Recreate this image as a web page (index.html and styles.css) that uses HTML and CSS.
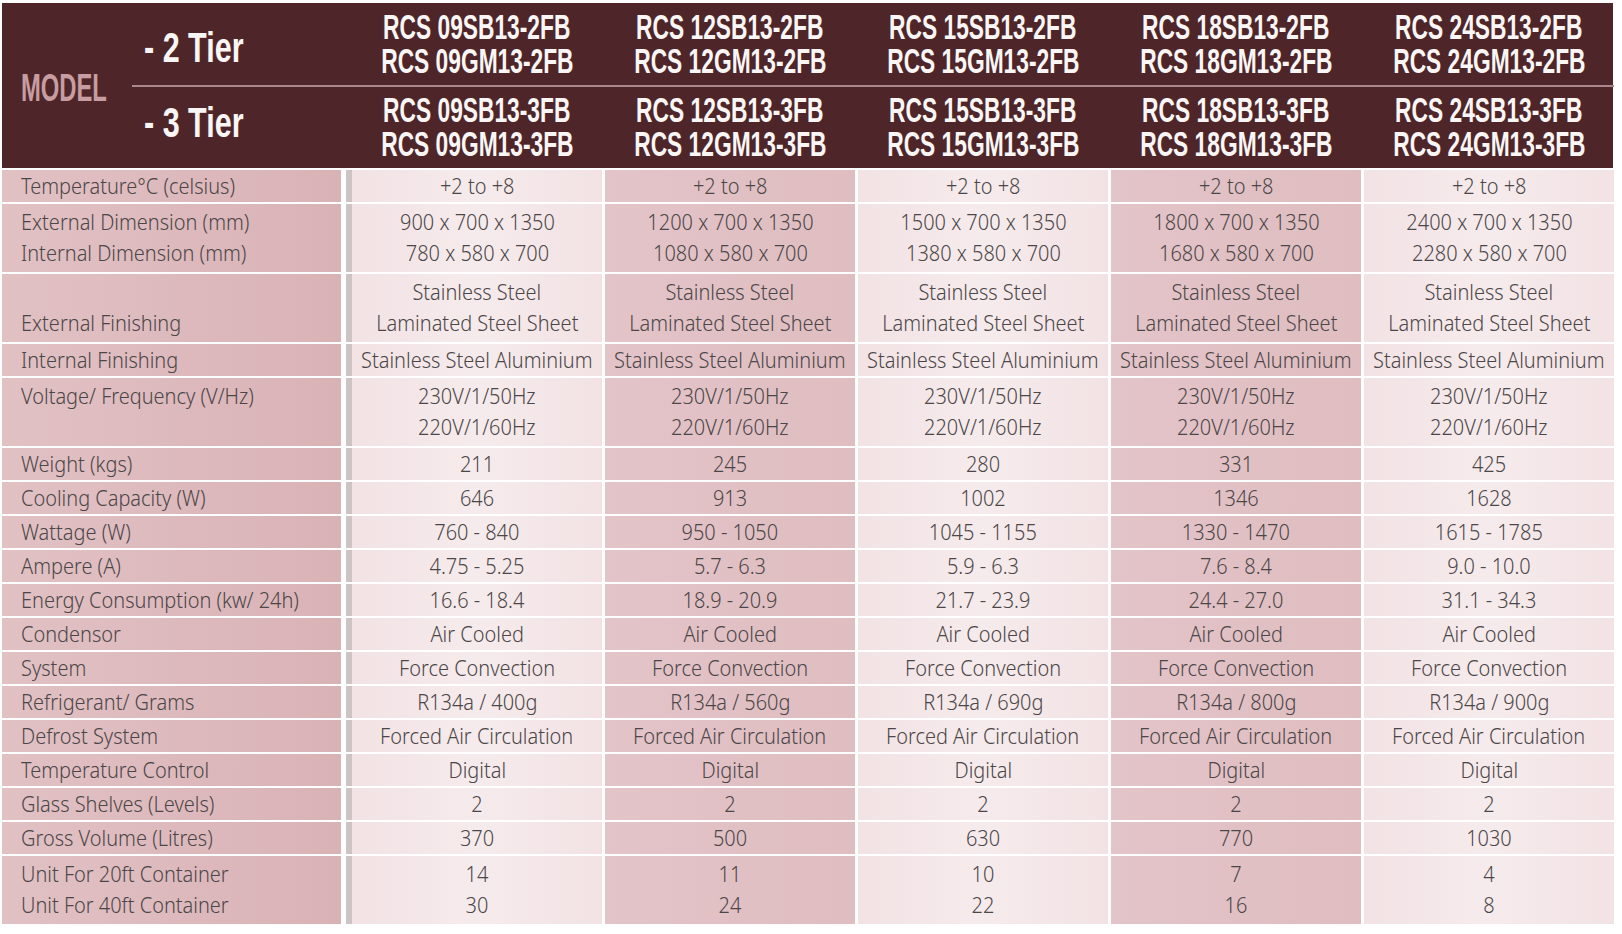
FILE: index.html
```html
<!DOCTYPE html>
<html>
<head>
<meta charset="utf-8">
<link rel="stylesheet" href="styles.css">
</head>
<body>
<div class="sheet">
  <div class="head">
    <div class="model"><span>MODEL</span></div>
    <div class="tiers">
      <div class="trow">
        <div class="tier t2"><span>- 2 Tier</span></div>
        <div class="code"><span>RCS 09SB13-2FB</span><span>RCS 09GM13-2FB</span></div>
        <div class="code"><span>RCS 12SB13-2FB</span><span>RCS 12GM13-2FB</span></div>
        <div class="code"><span>RCS 15SB13-2FB</span><span>RCS 15GM13-2FB</span></div>
        <div class="code"><span>RCS 18SB13-2FB</span><span>RCS 18GM13-2FB</span></div>
        <div class="code"><span>RCS 24SB13-2FB</span><span>RCS 24GM13-2FB</span></div>
      </div>
      <div class="hline"></div>
      <div class="trow">
        <div class="tier t3"><span>- 3 Tier</span></div>
        <div class="code"><span>RCS 09SB13-3FB</span><span>RCS 09GM13-3FB</span></div>
        <div class="code"><span>RCS 12SB13-3FB</span><span>RCS 12GM13-3FB</span></div>
        <div class="code"><span>RCS 15SB13-3FB</span><span>RCS 15GM13-3FB</span></div>
        <div class="code"><span>RCS 18SB13-3FB</span><span>RCS 18GM13-3FB</span></div>
        <div class="code"><span>RCS 24SB13-3FB</span><span>RCS 24GM13-3FB</span></div>
      </div>
    </div>
  </div>

  <div class="row"><div class="lab"><span>Temperature°C (celsius)</span></div><div class="c"><span>+2 to +8</span></div><div class="c"><span>+2 to +8</span></div><div class="c"><span>+2 to +8</span></div><div class="c"><span>+2 to +8</span></div><div class="c"><span>+2 to +8</span></div></div>
  <div class="row dbl"><div class="lab"><span>External Dimension (mm)</span><span>Internal Dimension (mm)</span></div><div class="c"><span>900 x 700 x 1350</span><span>780 x 580 x 700</span></div><div class="c"><span>1200 x 700 x 1350</span><span>1080 x 580 x 700</span></div><div class="c"><span>1500 x 700 x 1350</span><span>1380 x 580 x 700</span></div><div class="c"><span>1800 x 700 x 1350</span><span>1680 x 580 x 700</span></div><div class="c"><span>2400 x 700 x 1350</span><span>2280 x 580 x 700</span></div></div>
  <div class="row dbl"><div class="lab bottom"><span>External Finishing</span></div><div class="c"><span>Stainless Steel</span><span>Laminated Steel Sheet</span></div><div class="c"><span>Stainless Steel</span><span>Laminated Steel Sheet</span></div><div class="c"><span>Stainless Steel</span><span>Laminated Steel Sheet</span></div><div class="c"><span>Stainless Steel</span><span>Laminated Steel Sheet</span></div><div class="c"><span>Stainless Steel</span><span>Laminated Steel Sheet</span></div></div>
  <div class="row"><div class="lab"><span>Internal Finishing</span></div><div class="c"><span>Stainless Steel Aluminium</span></div><div class="c"><span>Stainless Steel Aluminium</span></div><div class="c"><span>Stainless Steel Aluminium</span></div><div class="c"><span>Stainless Steel Aluminium</span></div><div class="c"><span>Stainless Steel Aluminium</span></div></div>
  <div class="row dbl"><div class="lab top"><span>Voltage/ Frequency (V/Hz)</span></div><div class="c"><span>230V/1/50Hz</span><span>220V/1/60Hz</span></div><div class="c"><span>230V/1/50Hz</span><span>220V/1/60Hz</span></div><div class="c"><span>230V/1/50Hz</span><span>220V/1/60Hz</span></div><div class="c"><span>230V/1/50Hz</span><span>220V/1/60Hz</span></div><div class="c"><span>230V/1/50Hz</span><span>220V/1/60Hz</span></div></div>
  <div class="row"><div class="lab"><span>Weight (kgs)</span></div><div class="c"><span>211</span></div><div class="c"><span>245</span></div><div class="c"><span>280</span></div><div class="c"><span>331</span></div><div class="c"><span>425</span></div></div>
  <div class="row"><div class="lab"><span>Cooling Capacity (W)</span></div><div class="c"><span>646</span></div><div class="c"><span>913</span></div><div class="c"><span>1002</span></div><div class="c"><span>1346</span></div><div class="c"><span>1628</span></div></div>
  <div class="row"><div class="lab"><span>Wattage (W)</span></div><div class="c"><span>760 - 840</span></div><div class="c"><span>950 - 1050</span></div><div class="c"><span>1045 - 1155</span></div><div class="c"><span>1330 - 1470</span></div><div class="c"><span>1615 - 1785</span></div></div>
  <div class="row"><div class="lab"><span>Ampere (A)</span></div><div class="c"><span>4.75 - 5.25</span></div><div class="c"><span>5.7 - 6.3</span></div><div class="c"><span>5.9 - 6.3</span></div><div class="c"><span>7.6 - 8.4</span></div><div class="c"><span>9.0 - 10.0</span></div></div>
  <div class="row"><div class="lab"><span>Energy Consumption (kw/ 24h)</span></div><div class="c"><span>16.6 - 18.4</span></div><div class="c"><span>18.9 - 20.9</span></div><div class="c"><span>21.7 - 23.9</span></div><div class="c"><span>24.4 - 27.0</span></div><div class="c"><span>31.1 - 34.3</span></div></div>
  <div class="row"><div class="lab"><span>Condensor</span></div><div class="c"><span>Air Cooled</span></div><div class="c"><span>Air Cooled</span></div><div class="c"><span>Air Cooled</span></div><div class="c"><span>Air Cooled</span></div><div class="c"><span>Air Cooled</span></div></div>
  <div class="row"><div class="lab"><span>System</span></div><div class="c"><span>Force Convection</span></div><div class="c"><span>Force Convection</span></div><div class="c"><span>Force Convection</span></div><div class="c"><span>Force Convection</span></div><div class="c"><span>Force Convection</span></div></div>
  <div class="row"><div class="lab"><span>Refrigerant/ Grams</span></div><div class="c"><span>R134a / 400g</span></div><div class="c"><span>R134a / 560g</span></div><div class="c"><span>R134a / 690g</span></div><div class="c"><span>R134a / 800g</span></div><div class="c"><span>R134a / 900g</span></div></div>
  <div class="row"><div class="lab"><span>Defrost System</span></div><div class="c"><span>Forced Air Circulation</span></div><div class="c"><span>Forced Air Circulation</span></div><div class="c"><span>Forced Air Circulation</span></div><div class="c"><span>Forced Air Circulation</span></div><div class="c"><span>Forced Air Circulation</span></div></div>
  <div class="row"><div class="lab"><span>Temperature Control</span></div><div class="c"><span>Digital</span></div><div class="c"><span>Digital</span></div><div class="c"><span>Digital</span></div><div class="c"><span>Digital</span></div><div class="c"><span>Digital</span></div></div>
  <div class="row"><div class="lab"><span>Glass Shelves (Levels)</span></div><div class="c"><span>2</span></div><div class="c"><span>2</span></div><div class="c"><span>2</span></div><div class="c"><span>2</span></div><div class="c"><span>2</span></div></div>
  <div class="row"><div class="lab"><span>Gross Volume (Litres)</span></div><div class="c"><span>370</span></div><div class="c"><span>500</span></div><div class="c"><span>630</span></div><div class="c"><span>770</span></div><div class="c"><span>1030</span></div></div>
  <div class="row dbl"><div class="lab"><span>Unit For 20ft Container</span><span>Unit For 40ft Container</span></div><div class="c"><span>14</span><span>30</span></div><div class="c"><span>11</span><span>24</span></div><div class="c"><span>10</span><span>22</span></div><div class="c"><span>7</span><span>16</span></div><div class="c"><span>4</span><span>8</span></div></div>
</div>
</body>
</html>
```

FILE: styles.css
```css
html, body {
  margin: 0;
  background: #ffffff;
}

.sheet {
  padding: 3px 0 0 2px;
  width: 1611px;
}

/* ---------- header ---------- */
.head {
  display: flex;
  height: 165px;
  background: #4e2629;
  font-family: "Liberation Sans", Arial, sans-serif;
  font-weight: 700;
  white-space: nowrap;
}

.model {
  width: 130px;
  flex: none;
  box-sizing: border-box;
  padding-left: 19px;
  padding-top: 4px;
  display: flex;
  align-items: center;
  color: #c79da1;
  font-size: 39px;
}

.model span {
  display: inline-block;
  transform: scaleX(0.61);
  transform-origin: 0 50%;
}

.tiers {
  flex: 1;
  display: flex;
  flex-direction: column;
}

.trow {
  display: grid;
  grid-template-columns: 217px repeat(5, 250px);
  column-gap: 3px;
  height: 81.5px;
  align-items: center;
}

.hline {
  height: 2px;
  background: #a9878a;
}

.tier {
  padding-left: 12px;
  color: #fbf6f6;
  font-size: 43px;
  line-height: 46px;
}

.tier.t2 {
  margin-top: 7px;
}

.tier.t3 {
  margin-bottom: 10px;
}

.tier span {
  display: inline-block;
  transform: scaleX(0.71);
  transform-origin: 0 50%;
}

.code {
  display: flex;
  flex-direction: column;
  align-items: center;
  color: #fbf6f6;
  font-size: 33px;
  line-height: 34px;
}

.code span {
  display: inline-block;
  height: 34px;
  transform: scaleX(0.69) scaleY(1.05);
}

/* ---------- body rows ---------- */
.row {
  display: grid;
  grid-template-columns: 339px 258px repeat(4, 250px);
  column-gap: 3px;
  height: 32px;
  margin-top: 2px;
  font-family: "Noto Sans", "DejaVu Sans", sans-serif;
  font-weight: 300;
  font-size: 21px;
  line-height: 31px;
  color: #4b4647;
  white-space: nowrap;
}

.row.dbl {
  height: 68px;
}

.lab {
  display: flex;
  flex-direction: column;
  justify-content: center;
  align-items: flex-start;
  padding-left: 19px;
  background: linear-gradient(90deg, #e1c1c4 0%, #d9b2b6 100%);
}

.lab span {
  display: inline-block;
  transform: scaleX(0.95);
  transform-origin: 0 50%;
}

.lab.bottom {
  justify-content: flex-end;
  padding-bottom: 3px;
}

.lab.top {
  justify-content: flex-start;
  padding-top: 3px;
}

.c {
  display: flex;
  flex-direction: column;
  justify-content: center;
  align-items: center;
}

.c span {
  display: inline-block;
  transform: scaleX(0.95);
}

.row .c:nth-child(2) {
  margin-left: 2px;
  border-left: 6px solid #cdc4c5;
}

.row .c:nth-child(2),
.row .c:nth-child(4),
.row .c:nth-child(6) {
  background: linear-gradient(90deg, #f2e2e4 0%, #f6ebec 50%, #f2e2e4 100%);
}

.row .c:nth-child(3),
.row .c:nth-child(5) {
  background: linear-gradient(90deg, #e3c4c8 0%, #dfbdc1 100%);
}
```
